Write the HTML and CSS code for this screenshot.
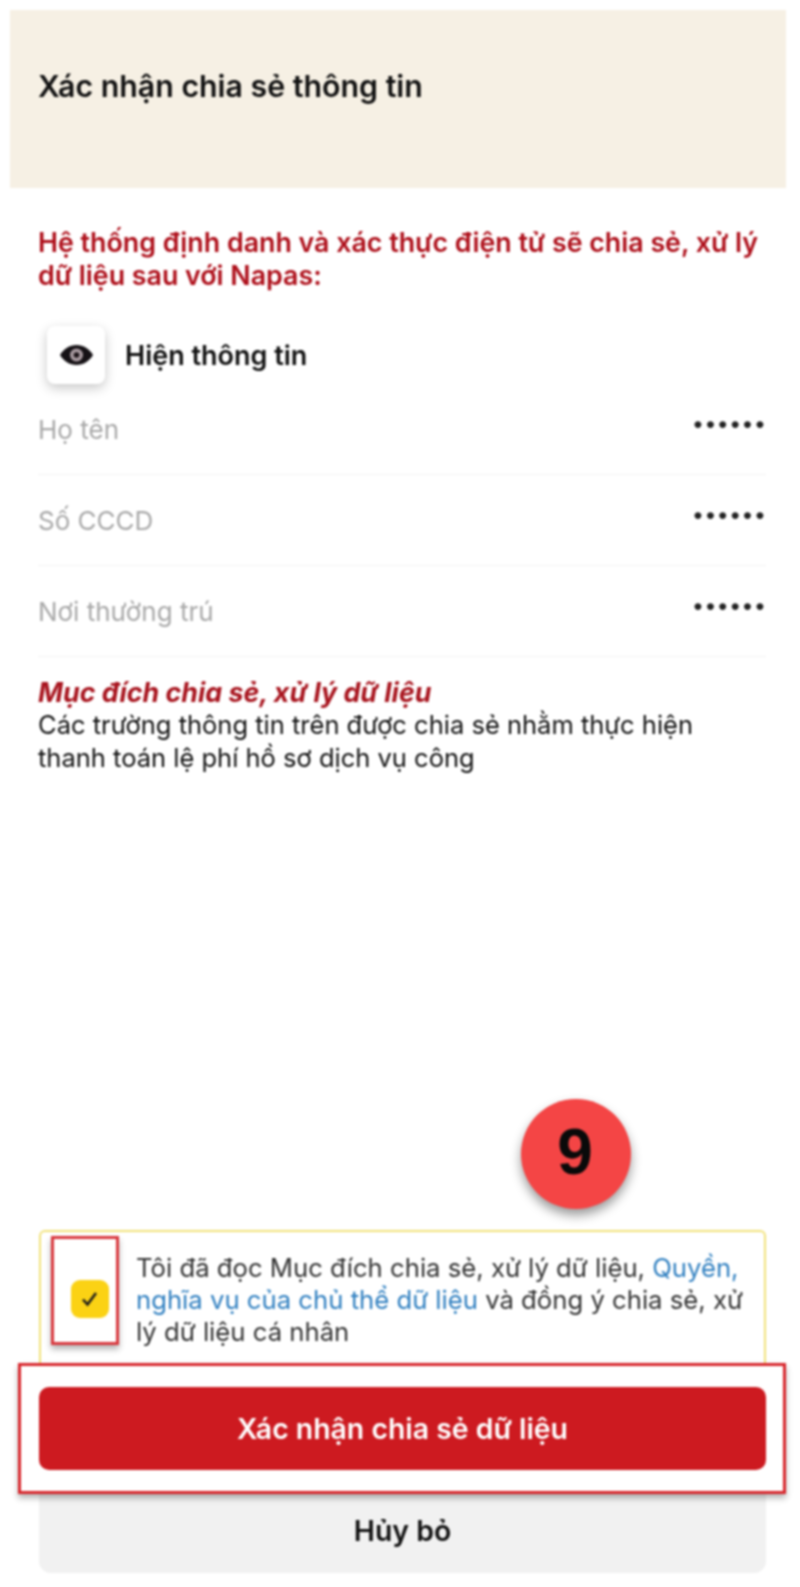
FILE: index.html
```html
<!DOCTYPE html>
<html lang="vi">
<head>
<meta charset="utf-8">
<title>Xác nhận chia sẻ thông tin</title>
<link rel="stylesheet" href="styles.css">
</head>
<body>
<div class="page">
  <header class="head"><h1>Xác nhận chia sẻ thông tin</h1></header>
  <main class="content">
    <p class="notice">Hệ thống định danh và xác thực điện tử sẽ chia sẻ, xử lý dữ liệu sau với Napas:</p>
    <div class="reveal">
      <span class="eye-btn">
        <svg width="33" height="20" viewBox="0 0 33 20"><path fill="#161216" d="M16.500 0C9.500 0 3.500 4 0 10c3.500 6 9.500 10 16.500 10S29.500 16 33 10C29.500 4 23.500 0 16.500 0Z"/><circle cx="16.500" cy="10" r="6.500" fill="#a89aa0"/><circle cx="16.500" cy="10" r="2.800" fill="#1c1418"/></svg>
      </span>
      <span class="reveal-label">Hiện thông tin</span>
    </div>
    <div class="row"><span class="key">Họ tên</span><span class="val">••••••</span></div>
    <div class="row"><span class="key">Số CCCD</span><span class="val">••••••</span></div>
    <div class="row"><span class="key">Nơi thường trú</span><span class="val">••••••</span></div>
    <h2 class="purpose">Mục đích chia sẻ, xử lý dữ liệu</h2>
    <p class="purpose-text">Các trường thông tin trên được chia sẻ nhằm thực hiện thanh toán lệ phí hồ sơ dịch vụ công</p>
  </main>
  <div class="footer">
    <div class="consent">
      <span class="check">
        <svg width="20" height="18" viewBox="0 0 20 18"><path d="M3 9.500l4.500 5L16 3" fill="none" stroke="#1c1c1c" stroke-width="2.600"/></svg>
      </span>
      <p class="consent-text">Tôi đã đọc Mục đích chia sẻ, xử lý dữ liệu, <a class="link">Quyền,</a> <a class="link">nghĩa vụ của chủ thể dữ liệu</a> và đồng ý chia sẻ, xử lý dữ liệu cá nhân</p>
    </div>
    <button class="btn btn-primary">Xác nhận chia sẻ dữ liệu</button>
    <button class="btn btn-cancel">Hủy bỏ</button>
  </div>
</div>
<div class="badge">9</div>
<div class="mark mark-check"></div>
<div class="mark mark-btn"></div>
</body>
</html>
```
FILE: styles.css
```css
* { box-sizing: border-box; }
html, body { margin: 0; padding: 0; background: #fff; }
body {
  position: relative;
  width: 800px;
  height: 1587px;
  overflow: hidden;
  font-family: Inter, "Noto Sans", sans-serif;
  color: #111;
  filter: blur(0.8px);
}
.page {
  height: 1587px;
  display: flex;
  flex-direction: column;
}
.head {
  margin: 10px 14px 0 10px;
  height: 178px;
  background: #f6f0e4;
  padding: 58px 0 0 28px;
}
.head h1 { margin: 0; font-size: 30.300px; line-height: 36px; font-weight: 600; }
.content { padding: 38px 34px 0 38px; flex: 1; }
.notice {
  margin: 0;
  color: #ae0f1a;
  font-size: 26.800px;
  line-height: 33px;
  font-weight: 600;
}
.reveal { display: flex; align-items: center; gap: 20px; margin: 34px 0 0 9px; }
.eye-btn {
  width: 58px;
  height: 58px;
  border-radius: 8px;
  background: #fff;
  display: flex;
  align-items: center;
  justify-content: center;
  box-shadow: 0 4px 12px rgba(0,0,0,.22);
}
.reveal-label { font-size: 27px; font-weight: 600; }
.row {
  height: 91px;
  display: flex;
  justify-content: space-between;
  align-items: center;
  border-bottom: 1px solid #f2f2f2;
}
.key { font-size: 26px; color: #a8a8a8; }
.val { font-size: 22px; color: #222; margin-top: -12px; }
.purpose {
  margin: 19px 0 0;
  color: #a8141e;
  font-size: 26.800px;
  line-height: 32px;
  font-style: italic;
  font-weight: 700;
}
.purpose-text { margin: 0; font-size: 25.500px; line-height: 33px; }
.footer { padding: 0 34px 14px 39px; }
.consent {
  height: 133px;
  display: flex;
  align-items: center;
  gap: 27px;
  padding: 0 14px 0 30px;
  border: 2px solid #f1e27a;
  border-bottom: 0;
  border-radius: 6px 6px 0 0;
}
.check {
  flex: none;
  width: 38px;
  height: 38px;
  margin-top: 2px;
  border-radius: 9px;
  background: #fbd214;
  display: flex;
  align-items: center;
  justify-content: center;
}
.consent-text { margin: 4px 0 0; font-size: 25.700px; line-height: 32px; color: #333; }
.link { color: #2f7fc0; }
.btn {
  display: block;
  width: 100%;
  border: 0;
  font: inherit;
  font-weight: 600;
  font-size: 28.400px;
}
.btn-primary {
  height: 83px;
  margin-top: 24px;
  background: #cd1a20;
  color: #fff;
  border-radius: 10px;
}
.btn-cancel {
  height: 80px;
  margin-top: 23px;
  background: #f1f1f1;
  color: #111;
  border-radius: 0 0 12px 12px;
  padding-bottom: 6px;
}
.badge {
  position: absolute;
  left: 521px;
  top: 1099px;
  width: 110px;
  height: 110px;
  padding: 0 2px 5px 0;
  border-radius: 50%;
  background: #f44545;
  box-shadow: 0 6px 11px rgba(0,0,0,.4);
  display: flex;
  align-items: center;
  justify-content: center;
  font: 700 64px "Liberation Sans", sans-serif;
  color: #0a0a0a;
}
.mark { position: absolute; border: 3px solid #d9383e; box-shadow: 0 4px 6px rgba(0,0,0,.3); }
.mark-check { left: 51px; top: 1236px; width: 68px; height: 109px; }
.mark-btn { left: 18px; top: 1363px; width: 768px; height: 131px; border-color: #d8262c; }
```
